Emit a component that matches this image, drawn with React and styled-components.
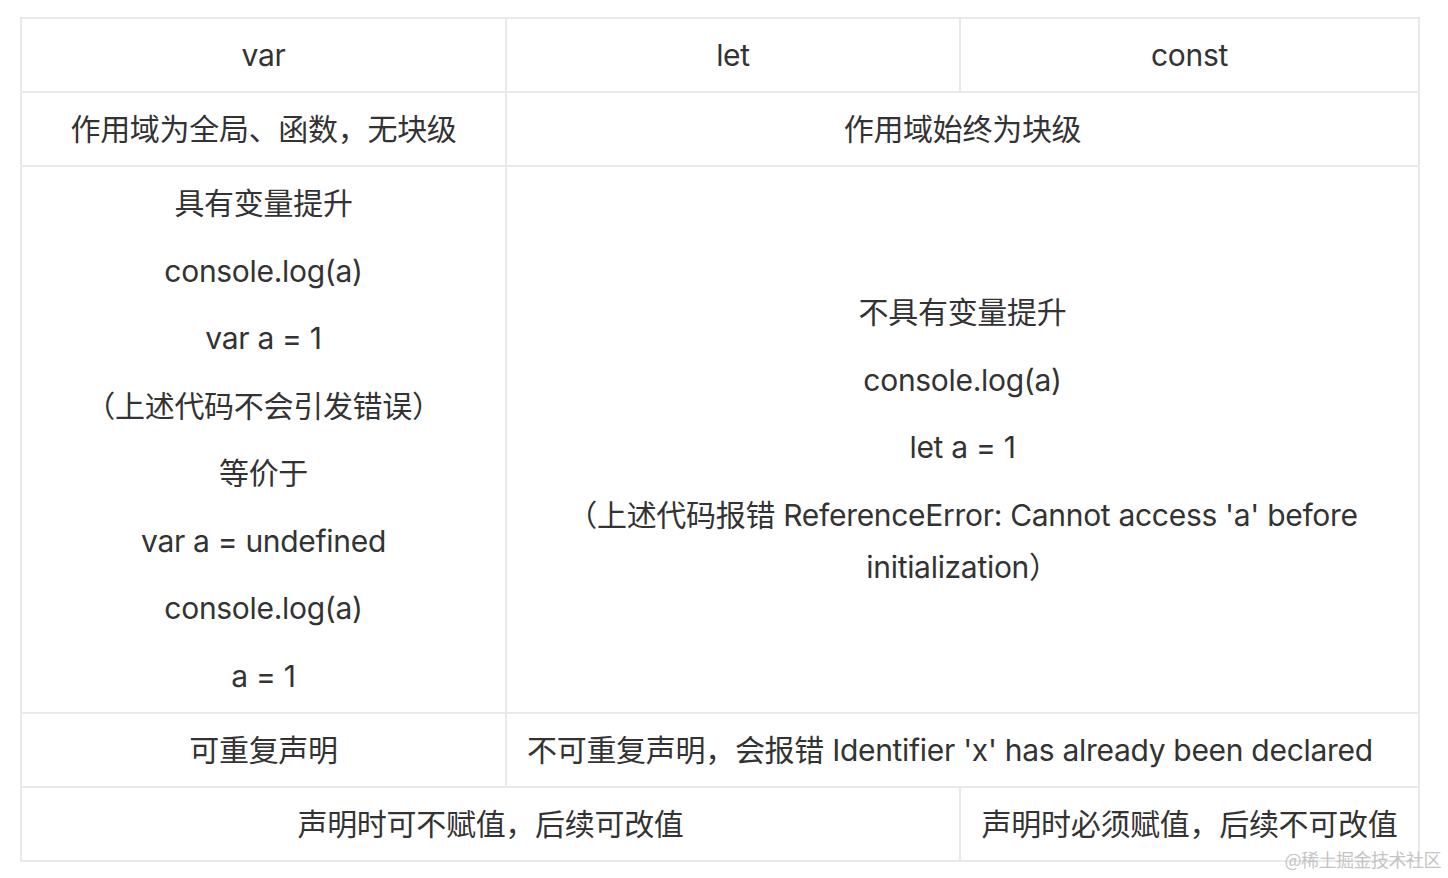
import React from 'react'
import styled, { createGlobalStyle } from 'styled-components'

const GlobalStyle = createGlobalStyle`
  html, body {
    margin: 0;
    padding: 0;
    background: #fff;
  }
  body {
    font-family: Inter, "Noto Sans CJK SC", sans-serif;
    color: #333;
  }
`

const Page = styled.div`
  position: relative;
  width: 1448px;
  height: 878px;
  padding: 17px 0 0 20px;
  box-sizing: border-box;
  overflow: hidden;
`

const Table = styled.table`
  border-collapse: collapse;
  table-layout: fixed;
  width: 1398px;
  font-size: 30px;
  line-height: 52px;
  letter-spacing: -0.3px;
  color: #333;
`

const Cell = styled.td`
  border: 2px solid #e9e9e9;
  padding: 10px 20px;
  text-align: ${({ $align }) => $align || 'center'};
  vertical-align: middle;
  white-space: ${({ $nowrap }) => ($nowrap ? 'nowrap' : 'normal')};
`

const Para = styled.p`
  margin: 15.5px 0;
  &:first-child { margin-top: 0; }
  &:last-child { margin-bottom: 0; }
`

const Watermark = styled.div`
  position: absolute;
  right: 7px;
  bottom: 7px;
  font-family: "Noto Sans CJK SC", sans-serif;
  font-size: 18px;
  line-height: 24px;
  color: #c4c4c4;
  letter-spacing: -0.5px;
`

const varLines = [
  '具有变量提升',
  'console.log(a)',
  'var a = 1',
  '（上述代码不会引发错误）',
  '等价于',
  'var a = undefined',
  'console.log(a)',
  'a = 1',
]

const letLines = [
  '不具有变量提升',
  'console.log(a)',
  'let a = 1',
  "（上述代码报错 ReferenceError: Cannot access 'a' before initialization）",
]

export default function App() {
  return (
    <Page>
      <GlobalStyle />
      <Table>
        <colgroup>
          <col style={{ width: 485 }} />
          <col style={{ width: 454 }} />
          <col style={{ width: 459 }} />
        </colgroup>
        <tbody>
          <tr>
            <Cell>var</Cell>
            <Cell>let</Cell>
            <Cell>const</Cell>
          </tr>
          <tr>
            <Cell>作用域为全局、函数，无块级</Cell>
            <Cell colSpan={2}>作用域始终为块级</Cell>
          </tr>
          <tr>
            <Cell>
              {varLines.map((t, i) => (
                <Para key={i}>{t}</Para>
              ))}
            </Cell>
            <Cell colSpan={2}>
              {letLines.map((t, i) => (
                <Para key={i}>{t}</Para>
              ))}
            </Cell>
          </tr>
          <tr>
            <Cell>可重复声明</Cell>
            <Cell colSpan={2} $nowrap $align="left">
              不可重复声明，会报错 Identifier 'x' has already been declared
            </Cell>
          </tr>
          <tr>
            <Cell colSpan={2}>声明时可不赋值，后续可改值</Cell>
            <Cell $nowrap>声明时必须赋值，后续不可改值</Cell>
          </tr>
        </tbody>
      </Table>
      <Watermark>@稀土掘金技术社区</Watermark>
    </Page>
  )
}
